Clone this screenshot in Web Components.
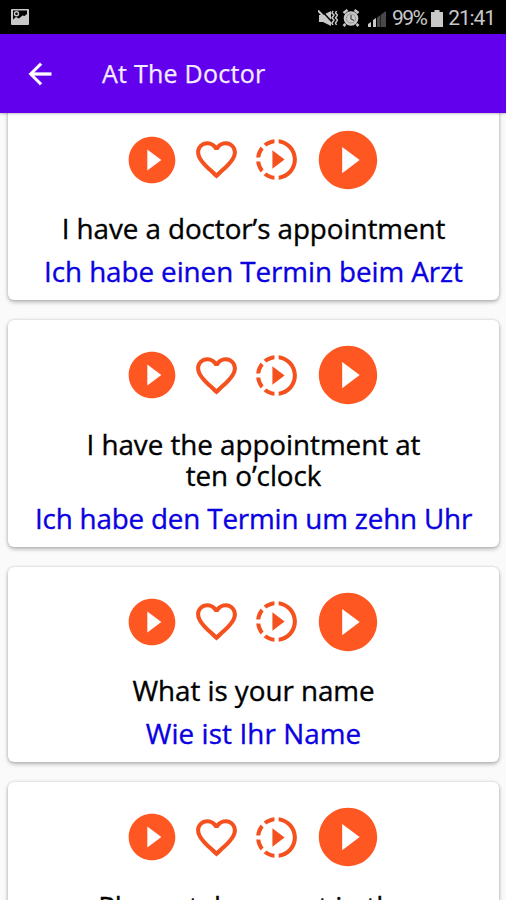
<!DOCTYPE html>
<html lang="en">
<head>
<meta charset="utf-8">
<meta name="viewport" content="width=device-width, initial-scale=1">
<title>At The Doctor</title>
<style>
    html, body {
        margin: 0;
        height: 100%;
        overflow: hidden;
    }
    body {
        font-family: "Open Sans", "Noto Sans", sans-serif;
        font-weight: 500;
        background: #fafafa;
    }
</style>
</head>
<body>
<phrase-app>
    <status-bar slot="status" battery="99%" time="21:41"></status-bar>
    <app-header slot="header">At The Doctor</app-header>
    <phrase-card>
        <phrase-line tracking="-0.07px">I have a doctor’s appointment</phrase-line>
        <phrase-line slot="translation" tracking="-0.07px">Ich habe einen Termin beim Arzt</phrase-line>
    </phrase-card>
    <phrase-card>
        <phrase-line tracking="-0.04px">I have the appointment at</phrase-line>
        <phrase-line tracking="-0.04px">ten o’clock</phrase-line>
        <phrase-line slot="translation" tracking="-0.17px">Ich habe den Termin um zehn Uhr</phrase-line>
    </phrase-card>
    <phrase-card>
        <phrase-line tracking="-0.04px">What is your name</phrase-line>
        <phrase-line slot="translation" tracking="0.1px">Wie ist Ihr Name</phrase-line>
    </phrase-card>
    <phrase-card>
        <phrase-line tracking="-0.04px">Please take a seat in the</phrase-line>
    </phrase-card>
</phrase-app>

<script>
class PhraseApp extends HTMLElement {
    constructor() {
        super();
        this.attachShadow({ mode: 'open' });

        this.shadowRoot.innerHTML = `
            <style>
                :host {
                    display: flex;
                    flex-direction: column;
                    height: 100vh;
                    overflow: hidden;
                }
                .list {
                    flex: 1;
                    min-height: 0;
                    overflow: hidden;
                    padding: 0 7px 0 8px;
                }
                /* the list is scrolled a little under the header */
                .cards {
                    display: flex;
                    flex-direction: column;
                    gap: 20px;
                    margin-top: -8.5px;
                }
            </style>
            <slot name="status"></slot>
            <slot name="header"></slot>
            <div class="list">
                <div class="cards"><slot></slot></div>
            </div>
        `;
    }
}

class StatusBar extends HTMLElement {
    constructor() {
        super();
        this.attachShadow({ mode: 'open' });

        this.shadowRoot.innerHTML = `
            <style>
                :host {
                    display: flex;
                    flex: none;
                    align-items: center;
                    box-sizing: border-box;
                    height: 34px;
                    padding: 2px 11px 0 11px;
                    background: #000;
                    color: #c8c8c8;
                    font: 21px/30px Roboto, sans-serif;
                }
                svg {
                    display: block;
                    flex: none;
                    fill: currentColor;
                }
                .space {
                    flex: 1;
                }
                .picture { margin-bottom: 2px; }
                .mute { margin-right: 4px; }
                .alarm { margin-right: 8px; }
                .signal { margin-right: 6px; }
                .battery { margin: 0 5px 0 5px; }
                span {
                    white-space: nowrap;
                    letter-spacing: -1.1px;
                }
                #battery {
                    letter-spacing: -1.6px;
                }
            </style>
            <svg class="picture" width="18" height="16" viewBox="0 0 18 16">
                <path fill-rule="evenodd" d="M1 0h16a1 1 0 0 1 1 1v14a1 1 0 0 1-1 1H1a1 1 0 0 1-1-1V1a1 1 0 0 1 1-1zM2 1.500v9l3-2.500 3 1.500 3.500-3 2 .5 2.500-2V1.500z"/>
                <circle cx="5.500" cy="4.800" r="2" fill="none" stroke="currentColor" stroke-width="1.400"/>
            </svg>
            <div class="space"></div>
            <svg class="mute" width="20" height="18" viewBox="0 0 20 18">
                <path d="M1 6h4l8-4v15l-8-4H1z"/>
                <path d="M2 0l13 14" stroke="#000" stroke-width="1.500"/>
                <path d="M0 1.500l13 14" fill="none" stroke="currentColor" stroke-width="2"/>
                <path d="M15 2l-1 2 2 2-2 3 2 2-2 3 1 2M18.500 2l-1 2 2 2-2 3 2 2-2 3 1 2" fill="none" stroke="currentColor" stroke-width="1.500"/>
            </svg>
            <svg class="alarm" width="18" height="18" viewBox="0 0 17 18">
                <circle cx="8.500" cy="9.500" r="7.300"/>
                <path d="M1 4l4-3M12 1l4 3M3 15l-2 2M14 15l2 2" stroke="currentColor" stroke-width="2.600"/>
                <circle cx="8.500" cy="9.500" r="4.600" fill="none" stroke="#8a8a8a" stroke-width=".8"/>
                <path d="M8.500 6v4l3 1.500" fill="none" stroke="#444" stroke-width="1.200"/>
            </svg>
            <svg class="signal" width="18" height="17" viewBox="0 0 18 17">
                <path d="M0 14l3-2v5H0zM5 10l3-2v9H5z"/>
                <path fill="#484848" d="M9 7.500l3.500-2.500v12H9zM13 4.500L18 1v16h-5z"/>
            </svg>
            <span id="battery"></span>
            <svg class="battery" width="12" height="17" viewBox="0 0 12 17">
                <path d="M3.500 0h5v2H12v15H0V2h3.500z"/>
            </svg>
            <span id="time"></span>
        `;
    }

    connectedCallback() {
        this.shadowRoot.getElementById('battery').textContent = this.getAttribute('battery');
        this.shadowRoot.getElementById('time').textContent = this.getAttribute('time');
    }
}

class AppHeader extends HTMLElement {
    constructor() {
        super();
        this.attachShadow({ mode: 'open' });

        this.shadowRoot.innerHTML = `
            <style>
                :host {
                    display: flex;
                    flex: none;
                    align-items: center;
                    box-sizing: border-box;
                    height: 79px;
                    padding-left: 23px;
                    gap: 45px;
                    background: #6200ee;
                    color: #f4ecff;
                    font-size: 25px;
                    letter-spacing: 0.25px;
                    -webkit-text-stroke: 0.25px currentColor;
                    position: relative;
                    z-index: 1;
                    box-shadow: 0 1px 2px rgba(0, 0, 0, 0.25);
                }
                svg {
                    display: block;
                    fill: #fff;
                }
                h1 {
                    margin: 0 0 2px;
                    font: inherit;
                    white-space: nowrap;
                }
            </style>
            <svg width="34" height="34" viewBox="0 0 24 24">
                <path d="M20 11H7.830l5.590-5.590L12 4l-8 8 8 8 1.410-1.410L7.830 13H20v-2z" stroke="#fff" stroke-width=".2"/>
            </svg>
            <h1><slot></slot></h1>
        `;
    }
}

class PhraseCard extends HTMLElement {
    constructor() {
        super();
        this.attachShadow({ mode: 'open' });

        this.shadowRoot.innerHTML = `
            <style>
                :host {
                    display: block;
                    box-sizing: border-box;
                    padding: 20px 0 13px;
                    border-radius: 6px;
                    background: #fff;
                    box-shadow: 0 2px 4px rgba(0, 0, 0, 0.28), 0 0 3px rgba(0, 0, 0, 0.14);
                    text-align: center;
                }
                .original {
                    margin-top: 18.500px;
                    color: #000;
                }
                .translation {
                    margin-top: 12px;
                    color: #0a00e0;
                }
            </style>
            <phrase-actions></phrase-actions>
            <div class="original"><slot></slot></div>
            <div class="translation"><slot name="translation"></slot></div>
        `;
    }
}

class PhraseActions extends HTMLElement {
    constructor() {
        super();
        this.attachShadow({ mode: 'open' });

        this.shadowRoot.innerHTML = `
            <style>
                :host {
                    display: flex;
                    justify-content: center;
                    align-items: center;
                    gap: 11.500px;
                    height: 70px;
                }
                svg {
                    display: block;
                    flex: none;
                    fill: #f4511e;
                }
                .play {
                    fill: #ff5722;
                }
            </style>
            <svg class="play" width="56" height="56" viewBox="0 0 24 24">
                <path d="M12 2C6.480 2 2 6.480 2 12s4.480 10 10 10 10-4.480 10-10S17.520 2 12 2zm-2 14.500v-9l6 4.500-6 4.500z"/>
            </svg>
            <svg width="49" height="49" viewBox="0 0 24 24">
                <path d="M16.500 3c-1.740 0-3.410.810-4.500 2.090C10.910 3.810 9.240 3 7.500 3 4.420 3 2 5.420 2 8.500c0 3.780 3.400 6.860 8.550 11.540L12 21.350l1.450-1.320C18.600 15.360 22 12.280 22 8.500 22 5.420 19.580 3 16.500 3zm-4.400 15.550l-.1.100-.1-.1C7.140 14.240 4 11.390 4 8.500 4 6.500 5.500 5 7.500 5c1.540 0 3.040.990 3.570 2.360h1.870C13.460 5.990 14.960 5 16.500 5c2 0 3.500 1.500 3.500 3.500 0 2.890-3.140 5.740-7.900 10.050z"/>
            </svg>
            <svg width="49" height="49" viewBox="0 0 24 24">
                <path d="M13.050 9.790L10 7.500v9l3.050-2.290L16 12zM11 4.070V2.050c-2.010.2-3.840 1-5.320 2.210L7.100 5.690c1.110-.86 2.440-1.440 3.900-1.620zM5.690 7.100L4.260 5.680C3.050 7.160 2.250 8.990 2.050 11h2.020c.18-1.460.76-2.790 1.620-3.900zM4.070 13H2.050c.2 2.010 1 3.840 2.210 5.320l1.430-1.430c-.86-1.100-1.440-2.430-1.620-3.890zm1.610 6.740C7.160 20.950 9 21.750 11 21.950v-2.020c-1.460-.18-2.790-.76-3.900-1.620l-1.420 1.430zM22 12c0 5.160-3.920 9.420-8.950 9.950v-2.020C16.970 19.410 20 16.050 20 12s-3.030-7.410-6.950-7.930V2.050C18.080 2.580 22 6.840 22 12z"/>
            </svg>
            <svg class="play" width="70" height="70" viewBox="0 0 24 24">
                <path d="M12 2C6.480 2 2 6.480 2 12s4.480 10 10 10 10-4.480 10-10S17.520 2 12 2zm-2 14.500v-9l6 4.500-6 4.500z"/>
            </svg>
        `;
    }
}

class PhraseLine extends HTMLElement {
    constructor() {
        super();
        this.attachShadow({ mode: 'open' });

        this.shadowRoot.innerHTML = `
            <style>
                :host {
                    display: block;
                    height: 31px;
                    font-size: 27.800px;
                    line-height: 31px;
                    letter-spacing: var(--tracking, 0);
                    -webkit-text-stroke: 0.35px currentColor;
                    white-space: nowrap;
                }
            </style>
            <slot></slot>
        `;
    }

    connectedCallback() {
        const tracking = this.getAttribute('tracking');
        if (tracking) this.style.setProperty('--tracking', tracking);
    }
}

customElements.define('phrase-app', PhraseApp);
customElements.define('status-bar', StatusBar);
customElements.define('app-header', AppHeader);
customElements.define('phrase-actions', PhraseActions);
customElements.define('phrase-line', PhraseLine);
customElements.define('phrase-card', PhraseCard);
</script>
</body>
</html>
